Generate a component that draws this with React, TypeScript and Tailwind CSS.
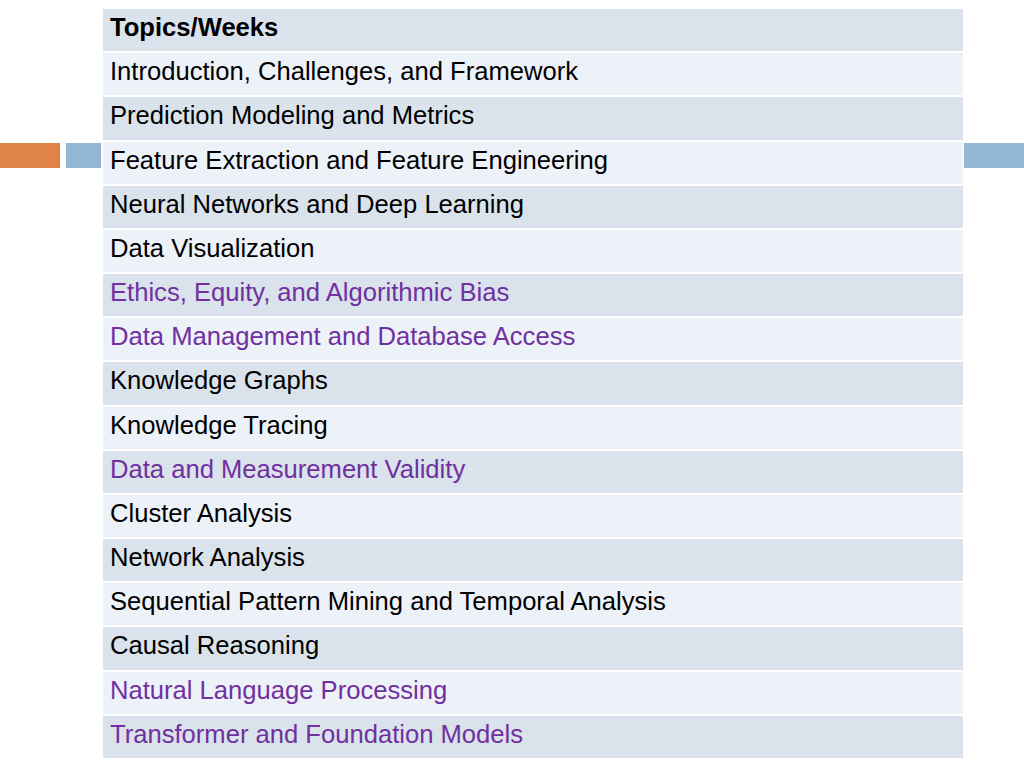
import React from 'react';

const topics: { label: string; purple?: boolean }[] = [
  { label: 'Introduction, Challenges, and Framework' },
  { label: 'Prediction Modeling and Metrics' },
  { label: 'Feature Extraction and Feature Engineering' },
  { label: 'Neural Networks and Deep Learning' },
  { label: 'Data Visualization' },
  { label: 'Ethics, Equity, and Algorithmic Bias', purple: true },
  { label: 'Data Management and Database Access', purple: true },
  { label: 'Knowledge Graphs' },
  { label: 'Knowledge Tracing' },
  { label: 'Data and Measurement Validity', purple: true },
  { label: 'Cluster Analysis' },
  { label: 'Network Analysis' },
  { label: 'Sequential Pattern Mining and Temporal Analysis' },
  { label: 'Causal Reasoning' },
  { label: 'Natural Language Processing', purple: true },
  { label: 'Transformer and Foundation Models', purple: true },
];

export default function App() {
  return (
    <div className="w-[1024px] h-[768px] bg-white flex items-start pt-[9px] font-['Liberation_Sans',Arial,sans-serif] overflow-hidden">
      {/* left accent bars */}
      <div className="mt-[134px] h-[25px] w-[60px] shrink-0 bg-[#e0834a]" />
      <div className="mt-[134px] ml-[6px] h-[25px] w-[35px] shrink-0 bg-[#93b6d4]" />

      {/* topics table */}
      <div className="ml-[2px] w-[860px] h-[749px] shrink-0 flex flex-col gap-[2px]">
        <div className="flex-1 min-h-0 flex items-center px-[7px] pb-[6px] leading-[30px] bg-[#dae2eb] text-[25.6px] font-bold text-black">
          Topics/Weeks
        </div>
        {topics.map((t, i) => (
          <div
            key={t.label}
            className={`flex-1 min-h-0 flex items-center px-[7px] pb-[6px] leading-[30px] text-[25.6px] ${
              i % 2 === 0 ? 'bg-[#edf1f8]' : 'bg-[#dae2eb]'
            } ${t.purple ? 'text-[#7030a0]' : 'text-black'}`}
          >
            {t.label}
          </div>
        ))}
      </div>

      {/* right accent bar */}
      <div className="mt-[134px] ml-[1px] h-[25px] flex-1 bg-[#93b6d4]" />
    </div>
  );
}
